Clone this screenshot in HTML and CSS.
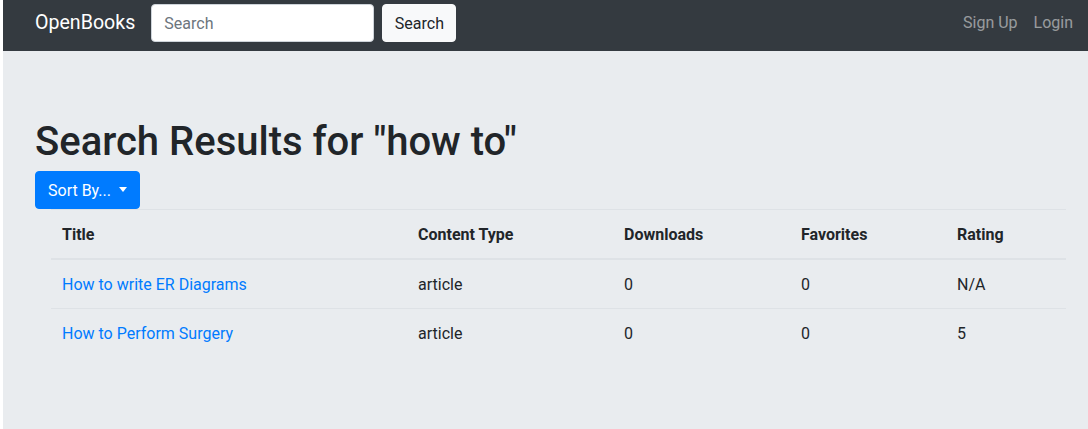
FILE: index.html
```html
<!DOCTYPE html>
<html lang="en">
<head>
<meta charset="utf-8">
<title>OpenBooks - Search</title>
<link rel="stylesheet" href="styles.css">
</head>
<body>
<div class="page">
  <nav class="navbar">
    <a class="brand" href="#">OpenBooks</a>
    <form class="search-form">
      <input class="search-input" type="text" placeholder="Search">
      <button class="search-btn" type="button">Search</button>
    </form>
    <div class="nav-right">
      <a class="nav-link" href="#">Sign Up</a>
      <a class="nav-link" href="#">Login</a>
    </div>
  </nav>
  <main class="jumbotron">
    <h1 class="title">Search Results for "how to"</h1>
    <button class="sort-btn" type="button">Sort By...<span class="caret"></span></button>
    <table class="results">
      <thead>
        <tr>
          <th class="c-title">Title</th>
          <th class="c-type">Content Type</th>
          <th class="c-dl">Downloads</th>
          <th class="c-fav">Favorites</th>
          <th class="c-rating">Rating</th>
        </tr>
      </thead>
      <tbody>
        <tr>
          <td><a href="#">How to write ER Diagrams</a></td>
          <td>article</td>
          <td>0</td>
          <td>0</td>
          <td>N/A</td>
        </tr>
        <tr>
          <td><a href="#">How to Perform Surgery</a></td>
          <td>article</td>
          <td>0</td>
          <td>0</td>
          <td>5</td>
        </tr>
      </tbody>
    </table>
  </main>
</div>
</body>
</html>
```
FILE: styles.css
```css
* { box-sizing: border-box; }
html, body {
  margin: 0;
  padding: 0;
  background: #fff;
  overflow: hidden;
}
body {
  font-family: Roboto, "Liberation Sans", Arial, sans-serif;
  font-size: 16px;
  line-height: 1.5;
  color: #212529;
}
.page {
  margin-left: 3px;
  height: 429px;
  display: flex;
  flex-direction: column;
}
.navbar {
  height: 51px;
  background: #343a40;
  display: flex;
  align-items: center;
  padding: 0 15px 5px 32px;
}
.brand {
  color: #fff;
  font-size: 19.6px;
  line-height: 30px;
  text-decoration: none;
  margin-right: 16px;
}
.search-form {
  display: flex;
  align-items: center;
}
.search-input {
  width: 223px;
  height: 38px;
  padding: 6px 12px;
  font-family: inherit;
  font-size: 16px;
  color: #495057;
  background: #fff;
  border: 1px solid #ced4da;
  border-radius: 4px;
  margin-right: 8px;
}
.search-input::placeholder { color: #6c757d; }
.search-btn {
  height: 38px;
  padding: 6px 11.5px;
  font-family: inherit;
  font-size: 16px;
  color: #212529;
  background: #f8f9fa;
  border: 1px solid #f8f9fa;
  border-radius: 4px;
}
.nav-right {
  margin-left: auto;
  display: flex;
  gap: 16px;
}
.nav-link {
  color: rgba(255, 255, 255, 0.5);
  text-decoration: none;
}
.jumbotron {
  flex: 1;
  background: #e9ecef;
  padding: 67px 0 0 32px;
}
.title {
  margin: 0 0 5px;
  font-size: 40px;
  font-weight: 500;
  line-height: 1.2;
}
.sort-btn {
  display: inline-flex;
  align-items: center;
  height: 38px;
  padding: 6px 12px;
  font-family: inherit;
  font-size: 16px;
  color: #fff;
  background: #007bff;
  border: 1px solid #007bff;
  border-radius: 4px;
}
.caret {
  display: inline-block;
  margin-left: 8px;
  border-top: 5px solid #fff;
  border-left: 4.5px solid transparent;
  border-right: 4.5px solid transparent;
  margin-top: -2px;
}
.results {
  margin-left: 16px;
  width: 1015px;
  border-collapse: collapse;
}
.results th,
.results td {
  padding: 13px 11px 11px;
  text-align: left;
  vertical-align: top;
  border-top: 1px solid #dee2e6;
}
.results th {
  font-weight: 700;
  border-bottom: 2px solid #dee2e6;
}
.results td a {
  color: #007bff;
  text-decoration: none;
}
.c-title { width: 356px; }
.c-type { width: 206px; }
.c-dl { width: 177px; }
.c-fav { width: 156px; }
```
